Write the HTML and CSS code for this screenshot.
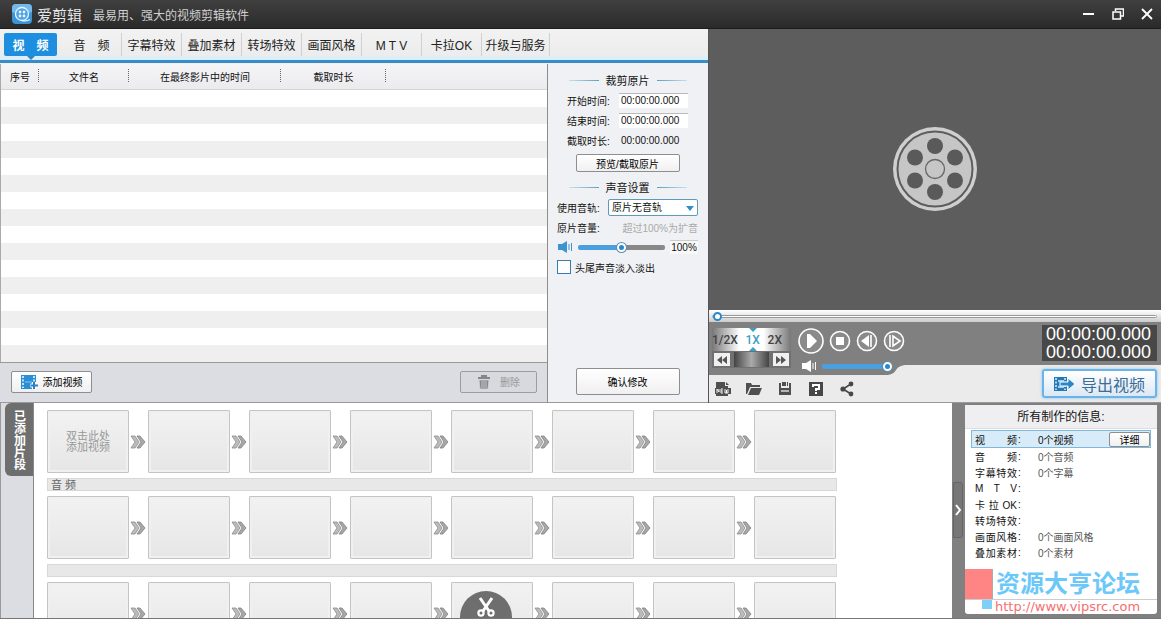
FILE: index.html
```html
<!DOCTYPE html>
<html lang="zh-CN">
<head>
    <meta charset="UTF-8">
    <meta name="viewport" content="width=device-width, initial-scale=1.0">
    <title>爱剪辑</title>
    <link rel="stylesheet" href="styles.css">
</head>
<body>
    <!-- 公用图标 -->
    <svg class="defs" width="0" height="0" aria-hidden="true">
        <symbol id="chevrons" viewBox="0 0 16 14">
            <path d="M1 1h4l4 6-4 6H1l4-6z" fill="#bcbcbc" stroke="#8c8c8c" stroke-width="0.800"/>
            <path d="M7 1h3l5 6-5 6H7l4-6z" fill="#a8a8a8" stroke="#808080" stroke-width="0.800"/>
        </symbol>
        <symbol id="speaker" viewBox="0 0 16 12">
            <path d="M1 3h4l5-3v12L5 9H1z" fill="currentColor"/>
            <path d="M12 3v6M14.500 2v8" fill="none" stroke="currentColor"/>
        </symbol>
    </svg>

    <header class="titlebar">
        <svg class="logo" viewBox="0 0 20 20">
            <rect width="20" height="20" rx="4" fill="#3b94d8"/>
            <path d="M0 4a4 4 0 0 1 4-4h12a4 4 0 0 1 4 4v4Q10 12 0 8z" fill="#73baec"/>
            <circle cx="10" cy="10" r="6.500" fill="#4ea3e0" stroke="#e8f6ff" stroke-width="1.300"/>
            <g fill="#e8f6ff"><circle cx="8" cy="8" r="1.400"/><circle cx="12" cy="8" r="1.400"/><circle cx="8" cy="12" r="1.400"/><circle cx="12" cy="12" r="1.400"/></g>
            <path d="M10 16.500q5 1 8-1" fill="none" stroke="#e8f6ff" stroke-width="1.300"/>
        </svg>
        <h1>爱剪辑</h1>
        <p>最易用、强大的视频剪辑软件</p>
        <div class="window-buttons">
            <button aria-label="最小化"><svg viewBox="0 0 12 12"><path d="M0 6h11" stroke="#fff" stroke-width="2"/></svg></button>
            <button aria-label="还原"><svg viewBox="0 0 12 12"><path d="M3.500 3V1h8v7H9M1 4h7.500v7H1z" fill="none" stroke="#fff" stroke-width="1.500"/></svg></button>
            <button aria-label="关闭"><svg viewBox="0 0 12 12"><path d="M1 1l10 10M11 1L1 11" stroke="#fff" stroke-width="1.800"/></svg></button>
        </div>
    </header>

    <main class="workspace">
        <section class="editor">
            <nav class="tabs">
                <a href="#" class="active">视&emsp;频</a>
                <a href="#">音&emsp;频</a>
                <a href="#">字幕特效</a>
                <a href="#">叠加素材</a>
                <a href="#">转场特效</a>
                <a href="#">画面风格</a>
                <a href="#">M T V</a>
                <a href="#">卡拉OK</a>
                <a href="#" class="wide">升级与服务</a>
            </nav>

            <div class="editor-body">
                <div class="files">
                    <div class="file-list">
                        <table>
                            <thead>
                                <tr>
                                    <th class="col-no">序号</th>
                                    <th class="col-name">文件名</th>
                                    <th class="col-time">在最终影片中的时间</th>
                                    <th class="col-length">截取时长</th>
                                    <th></th>
                                </tr>
                            </thead>
                        </table>
                        <div class="stripes"></div>
                    </div>
                    <div class="file-actions">
                        <button class="btn">
                            <svg width="18" height="14" viewBox="0 0 18 14">
                                <rect width="15" height="14" fill="#2b8fd6"/>
                                <path d="M2 1v12M13 1v7" stroke="#fff" stroke-width="1.500" stroke-dasharray="2 1.500"/>
                                <path d="M4 7h7" stroke="#8cc8f0"/>
                                <path d="M13 7v7M9.500 10.500h7" stroke="#fff" stroke-width="4"/>
                                <path d="M13 7v7M10 10.500h7" stroke="#2b7fc0" stroke-width="2"/>
                            </svg>
                            添加视频
                        </button>
                        <button class="btn btn-delete" disabled>
                            <svg width="14" height="14" viewBox="0 0 14 14">
                                <path d="M1 3h12M5 2V1h4v1" fill="none" stroke="#85858c" stroke-width="2"/>
                                <path d="M2 5h10l-1 9H3zM5 6v7M7 6v7M9 6v7" fill="#85858c" stroke="#d4d4db" stroke-width="0.800"/>
                            </svg>
                            删除
                        </button>
                    </div>
                </div>

                <form class="settings">
                    <h2>裁剪原片</h2>
                    <div class="row trim"><label for="start">开始时间:</label><input id="start" type="text" value="00:00:00.000"></div>
                    <div class="row trim"><label for="end">结束时间:</label><input id="end" type="text" value="00:00:00.000"></div>
                    <div class="row trim"><label for="length">截取时长:</label><output id="length">00:00:00.000</output></div>
                    <button type="button" class="btn btn-preview">预览/截取原片</button>

                    <h2>声音设置</h2>
                    <div class="row">
                        <label class="track-label" for="track">使用音轨:</label>
                        <span class="select"><select id="track"><option>原片无音轨</option></select></span>
                    </div>
                    <div class="row spread"><label for="gain">原片音量:</label><span class="hint">超过100%为扩音</span></div>
                    <div class="row spread">
                        <svg class="speaker blue"><use href="#speaker"/></svg>
                        <input id="gain" class="slider gain" type="range" value="50">
                        <output class="percent">100%</output>
                    </div>
                    <div class="row"><input id="fade" type="checkbox"><label for="fade">头尾声音淡入淡出</label></div>
                    <button type="button" class="btn btn-confirm">确认修改</button>
                </form>
            </div>
        </section>

        <section class="player">
            <div class="screen">
                <svg width="88" height="88" viewBox="-44 -44 88 88">
                    <circle r="42" fill="#cfcfcf"/>
                    <circle r="37.500" fill="#c6c6c6" stroke="#5d5d5d" stroke-width="2"/>
                    <circle r="9.500" fill="#c6c6c6" stroke="#666" stroke-width="1.300"/>
                    <g fill="#5a5a5a">
                        <circle cy="-23" r="8"/><circle cx="20" cy="-11.500" r="8"/><circle cx="20" cy="11.500" r="8"/>
                        <circle cy="23" r="8"/><circle cx="-20" cy="11.500" r="8"/><circle cx="-20" cy="-11.500" r="8"/>
                    </g>
                </svg>
            </div>
            <div class="seek"><input class="slider position" type="range" value="0" aria-label="播放进度"></div>
            <div class="controls">
                <div class="speed">
                    <div class="speed-values">
                        <button>1/2X</button><button class="current">1X</button><button>2X</button>
                    </div>
                    <div class="shuttle">
                        <button aria-label="后退"><svg viewBox="0 0 12 8"><path d="M6 0v8L1 4zM11 0v8L6 4z" fill="#555"/></svg></button>
                        <span class="wheel"></span>
                        <button aria-label="前进"><svg viewBox="0 0 12 8"><path d="M1 0v8l5-4zM6 0v8l5-4z" fill="#555"/></svg></button>
                    </div>
                </div>
                <div class="transport">
                    <div class="transport-buttons">
                        <button class="play" aria-label="播放"><svg viewBox="-13 -13 26 26"><circle r="12" fill="#8a8a8a" stroke="#fff" stroke-width="1.600"/><path d="M-4-7h3l7 7-7 7h-3z" fill="#fff"/></svg></button>
                        <button aria-label="停止"><svg viewBox="-11 -11 22 22"><circle r="9.500" fill="#8a8a8a" stroke="#fff" stroke-width="1.600"/><path d="M-4-4h8v8h-8z" fill="#fff"/></svg></button>
                        <button aria-label="上一帧"><svg viewBox="-11 -11 22 22"><circle r="9.500" fill="#8a8a8a" stroke="#fff" stroke-width="1.600"/><path d="M2-6v12l-8-6z" fill="#fff"/><path d="M4-6V6" stroke="#fff" stroke-width="1.600"/></svg></button>
                        <button aria-label="下一帧"><svg viewBox="-11 -11 22 22"><circle r="9.500" fill="#8a8a8a" stroke="#fff" stroke-width="1.600"/><path d="M-1-5v10l7-5z" fill="none" stroke="#fff" stroke-width="1.600"/><path d="M-4-6V6" stroke="#fff" stroke-width="1.600"/></svg></button>
                    </div>
                    <div class="volume">
                        <svg class="speaker"><use href="#speaker"/></svg>
                        <input class="slider level" type="range" value="100" aria-label="音量">
                    </div>
                </div>
                <div class="timecode"><span>00:00:00.000</span><span>00:00:00.000</span></div>
            </div>
            <div class="player-footer">
                <div class="tools">
                    <button aria-label="新建"><svg viewBox="0 0 16 16"><path d="M1 1h9v4h3v10H1z" fill="#505050"/><path d="M11 1l3 3h-3z" fill="#505050"/><path d="M0 7h16v6H0z" fill="#505050"/><path d="M2 12V8l2 3V8M6 8v4h2M6 10h2M6 8h2M10 8v4h1.500V9v3H13V8" fill="none" stroke="#fff" stroke-width="0.900"/></svg></button>
                    <button aria-label="打开"><svg viewBox="0 0 16 16"><path d="M0 2h5l1 2h8v2H4L1 13H0z" fill="#505050"/><path d="M5 7h11l-3 7H2z" fill="#505050"/></svg></button>
                    <button aria-label="保存"><svg viewBox="0 0 16 16"><path d="M2 2h2v5h8V2h2v12H2z" fill="#505050"/><path d="M5 1h4v4H5zM10 1h1v4h-1z" fill="#505050"/><path d="M4 10h8" stroke="#eee" stroke-width="1.300"/></svg></button>
                    <button aria-label="帮助"><svg viewBox="0 0 16 16"><path d="M1 1h14v14H1z" fill="#484848"/><path d="M5 6V4h6v4H8v2M8 11v2" fill="none" stroke="#fff" stroke-width="2"/></svg></button>
                    <button aria-label="分享"><svg viewBox="0 0 16 16"><path d="M12 3L4 8l8 5" fill="none" stroke="#484848" stroke-width="1.600"/><g fill="#484848"><circle cx="12" cy="3" r="2.400"/><circle cx="4" cy="8" r="2.600"/><circle cx="12" cy="13" r="2.400"/></g></svg></button>
                </div>
                <button class="export">
                    <svg width="22" height="16" viewBox="0 0 22 16">
                        <path d="M0 1h13v14H0z" fill="#2579b5"/>
                        <path d="M2 2v12M11 2v12" stroke="#fff" stroke-width="1.300" stroke-dasharray="2 1.500"/>
                        <path d="M4 5h6M4 11h6" stroke="#9cd0f0" stroke-width="2"/>
                        <path d="M6 6h8V2l7 6-7 6v-4H6z" fill="#2b88c8" stroke="#fff"/>
                    </svg>
                    导出视频
                </button>
            </div>
        </section>
    </main>

    <section class="bottom">
        <div class="side"><span class="side-tab">已添加片段</span></div>
        <div class="timeline">
            <div class="clips">
                <div class="clip">双击此处<br>添加视频</div><svg><use href="#chevrons"/></svg>
                <div class="clip"></div><svg><use href="#chevrons"/></svg>
                <div class="clip"></div><svg><use href="#chevrons"/></svg>
                <div class="clip"></div><svg><use href="#chevrons"/></svg>
                <div class="clip"></div><svg><use href="#chevrons"/></svg>
                <div class="clip"></div><svg><use href="#chevrons"/></svg>
                <div class="clip"></div><svg><use href="#chevrons"/></svg>
                <div class="clip"></div>
            </div>
            <div class="audio-bar">音 频</div>
            <div class="clips">
                <div class="clip"></div><svg><use href="#chevrons"/></svg>
                <div class="clip"></div><svg><use href="#chevrons"/></svg>
                <div class="clip"></div><svg><use href="#chevrons"/></svg>
                <div class="clip"></div><svg><use href="#chevrons"/></svg>
                <div class="clip"></div><svg><use href="#chevrons"/></svg>
                <div class="clip"></div><svg><use href="#chevrons"/></svg>
                <div class="clip"></div><svg><use href="#chevrons"/></svg>
                <div class="clip"></div>
            </div>
            <div class="audio-bar"></div>
            <div class="clips">
                <div class="clip"></div><svg><use href="#chevrons"/></svg>
                <div class="clip"></div><svg><use href="#chevrons"/></svg>
                <div class="clip"></div><svg><use href="#chevrons"/></svg>
                <div class="clip"></div><svg><use href="#chevrons"/></svg>
                <div class="clip"></div><svg><use href="#chevrons"/></svg>
                <div class="clip"></div><svg><use href="#chevrons"/></svg>
                <div class="clip"></div><svg><use href="#chevrons"/></svg>
                <div class="clip"></div>
            </div>
            <button class="cut" aria-label="剪切">
                <svg width="20" height="20" viewBox="0 0 20 20">
                    <path d="M4 1l9 13M16 1L7 14" stroke="#fff" stroke-width="3"/>
                    <circle cx="5" cy="16" r="2.600" fill="none" stroke="#fff" stroke-width="2.200"/>
                    <circle cx="15" cy="16" r="2.600" fill="none" stroke="#fff" stroke-width="2.200"/>
                </svg>
            </button>
        </div>
        <aside class="info">
            <button class="collapse" aria-label="收起"><svg width="7" height="12" viewBox="0 0 7 12"><path d="M1 1l4 5-4 5" fill="none" stroke="#fff" stroke-width="2"/></svg></button>
            <div class="info-panel">
                <h2>所有制作的信息:</h2>
                <ul>
                    <li class="selected"><b>视 频</b><i>:</i><span>0个视频</span><button class="btn">详细</button></li>
                    <li><b>音 频</b><i>:</i><span>0个音频</span></li>
                    <li><b>字幕特效</b><i>:</i><span>0个字幕</span></li>
                    <li><b>M T V</b><i>:</i></li>
                    <li><b>卡 拉 OK</b><i>:</i></li>
                    <li><b>转场特效</b><i>:</i></li>
                    <li><b>画面风格</b><i>:</i><span>0个画面风格</span></li>
                    <li><b>叠加素材</b><i>:</i><span>0个素材</span></li>
                </ul>
                <div class="forum">
                    <div class="forum-name"><span class="pink"></span><strong>资源大亨论坛</strong></div>
                    <div class="forum-url"><span class="blue-box"></span><a href="#">http://www.vipsrc.com</a></div>
                </div>
            </div>
        </aside>
    </section>
</body>
</html>
```

FILE: styles.css
```css
* {
    box-sizing: border-box;
}

body {
    margin: 0;
    height: 100vh;
    display: flex;
    flex-direction: column;
    overflow: hidden;
    font-family: "Liberation Sans", "Noto Sans CJK SC", sans-serif;
    font-size: 10px;
    color: #111;
    background: #dcdce3;
}

h1, h2, p, ul {
    margin: 0;
    padding: 0;
    font-weight: normal;
}

button, input, select {
    font: inherit;
    color: inherit;
    margin: 0;
    padding: 0;
    border: 0;
    background: none;
}

svg {
    display: block;
    flex: none;
}

.defs {
    position: absolute;
}

/* 标题栏 */
.titlebar {
    flex: none;
    height: 29px;
    display: flex;
    align-items: center;
    padding: 0 8px 0 12px;
    background: linear-gradient(#404040, #2a2a2a);
    border-bottom: 1px solid #1c1c1c;
    color: #e6e6e6;
}

.logo {
    width: 20px;
    height: 20px;
    margin-right: 5px;
}

.titlebar h1 {
    font-size: 15px;
}

.titlebar p {
    margin-left: 11px;
    font-size: 12px;
    color: #d0d0d0;
}

.window-buttons {
    display: flex;
    gap: 17px;
    margin-left: auto;
}

.window-buttons svg {
    width: 12px;
    height: 12px;
}

.workspace {
    flex: 1;
    min-height: 0;
    display: flex;
}

.editor {
    flex: 0 0 709px;
    display: flex;
    flex-direction: column;
    border-right: 1px solid #555;
}

/* 标签页 */
.tabs {
    display: flex;
    height: 35px;
    padding: 4px 0 0 1px;
    background: linear-gradient(#f2f2f2, #ececec 27px, #d9effb 28px, #d9effb 31px, #3a8cc4 31px, #3a8cc4 34px, #f0f0f0 34px);
}

.tabs a {
    width: 60px;
    height: 23px;
    line-height: 26px;
    font-size: 12px;
    text-align: center;
    white-space: nowrap;
    color: #222;
    text-decoration: none;
    border-right: 1px solid #d0d0d0;
}

.tabs .wide {
    width: 68px;
}

.tabs .active {
    position: relative;
    width: 53px;
    margin: 0 5px 0 3px;
    border: 0;
    border-radius: 2px;
    background: #1e8fe0;
    color: #fff;
    font-weight: bold;
}

.tabs .active::after {
    content: "";
    position: absolute;
    left: 23px;
    top: 23px;
    border: 4px solid transparent;
    border-top-color: #2d86c4;
}

.editor-body {
    flex: 1;
    min-height: 0;
    display: flex;
}

.files {
    flex: 1;
    display: flex;
    flex-direction: column;
    border-right: 1px solid #8c8c8c;
}

.file-list {
    flex: 1;
    display: flex;
    flex-direction: column;
    border-left: 1px solid #aaa;
    background: #fff;
}

.file-list table {
    width: 100%;
    table-layout: fixed;
    border-collapse: collapse;
}

.file-list th {
    height: 25px;
    padding: 0;
    font-weight: normal;
    background:
        repeating-linear-gradient(#666 0 1px, transparent 1px 2px) right 5px / 1px 14px no-repeat,
        linear-gradient(#f5f5f7, #ebebee);
    border-bottom: 1px solid #d4d4d4;
}

.file-list th:last-child {
    background: linear-gradient(#f5f5f7, #ebebee);
}

.col-no {
    width: 38px;
}

.col-name {
    width: 90px;
}

.col-time {
    width: 152px;
}

.col-length {
    width: 105px;
}

.stripes {
    flex: 1;
    background: repeating-linear-gradient(#fff 0 17px, #efefef 17px 34px);
}

.file-actions {
    height: 41px;
    display: flex;
    justify-content: space-between;
    align-items: center;
    padding: 0 10px 2px 11px;
    border-top: 1px solid #999;
    border-bottom: 1px solid #999;
    background: #dcdce3;
}

.btn {
    display: flex;
    align-items: center;
    justify-content: center;
    border: 1px solid #8e8e8e;
    border-radius: 2px;
    background: linear-gradient(#fff, #f0f0f0);
    color: #000;
}

.file-actions .btn {
    width: 81px;
    height: 22px;
    gap: 4px;
}

.file-actions .btn-delete {
    width: 77px;
    gap: 9px;
    background: #d8d8df;
    border-color: #9c9ca4;
    color: #999;
}

/* 右侧设置 */
.settings {
    width: 160px;
    display: flex;
    flex-direction: column;
    padding: 6px 10px 7px 9px;
    background: #f0f1f4;
    border-bottom: 1px solid #999;
}

.settings h2 {
    display: flex;
    align-items: center;
    justify-content: center;
    gap: 7px;
    height: 20px;
    font-size: 11px;
}

.settings h2::before,
.settings h2::after {
    content: "";
    width: 30px;
    height: 1px;
    background: linear-gradient(90deg, #c8dfec, #5a9fc4);
}

.settings h2::after {
    background: linear-gradient(90deg, #5a9fc4, #c8dfec);
}

.row {
    display: flex;
    align-items: center;
    gap: 4px;
    height: 20px;
    white-space: nowrap;
}

.trim {
    padding: 0 10px;
    justify-content: space-between;
}

.trim input,
.trim output {
    width: 69px;
    height: 15px;
    padding-left: 2px;
    line-height: 15px;
}

.trim input {
    background: #fff;
    border-top: 1px solid #bbb;
}

.btn-preview {
    width: 104px;
    height: 18px;
    margin: 4px auto 5px;
}

.btn-confirm {
    width: 104px;
    height: 27px;
    margin: auto auto 0;
}

.track-label {
    width: 47px;
}

.select {
    position: relative;
    flex: 1;
}

.select select {
    width: 100%;
    height: 17px;
    padding-left: 3px;
    appearance: none;
    border: 1px solid #5f9ab8;
    border-radius: 2px;
    background: #fff;
}

.select::after {
    content: "";
    position: absolute;
    right: 4px;
    top: 7px;
    border: 4px solid transparent;
    border-top: 5px solid #2f8fc8;
    border-bottom: 0;
    pointer-events: none;
}

.spread {
    justify-content: space-between;
}

.hint {
    color: #aaa;
}

.speaker {
    width: 16px;
    height: 12px;
    color: #fff;
}

.blue {
    color: #3a94d0;
}

.percent {
    width: 28px;
    height: 14px;
    line-height: 14px;
    text-align: center;
    border-top: 1px solid #ccc;
    background: #f8f8f8;
}

.settings input[type="checkbox"] {
    width: 14px;
    height: 14px;
    appearance: none;
    border: 1px solid #2f7fb0;
    background: #fff;
}

/* 滑块 */
.slider {
    appearance: none;
    height: 10px;
}

.slider::-webkit-slider-runnable-track {
    height: 5px;
    border-radius: 2px;
    background: #4a9fe0;
}

.slider::-webkit-slider-thumb {
    appearance: none;
    width: 9px;
    height: 9px;
    margin-top: -2px;
    border: 2px solid #fff;
    border-radius: 50%;
    background: #2b88c8;
    box-shadow: 0 0 0 1px #5a8fb0;
}

.gain {
    width: 87px;
}

.gain::-webkit-slider-runnable-track {
    background: linear-gradient(90deg, #4a9fe0 50%, #888 50%);
}

/* 播放器 */
.player {
    flex: 1;
    min-width: 0;
    display: flex;
    flex-direction: column;
}

.screen {
    flex: 1;
    display: flex;
    align-items: center;
    justify-content: center;
    padding-bottom: 2px;
    background: #5d5d5d;
}

.seek {
    height: 12px;
    display: flex;
    align-items: center;
    padding: 0 4px 0 3px;
    background: linear-gradient(#fff, #ccc);
}

.position {
    width: 100%;
}

.position::-webkit-slider-runnable-track {
    height: 3px;
    background: #fff;
    border: 1px solid #999;
}

.position::-webkit-slider-thumb {
    margin-top: -4px;
    border-color: #2b88c8;
    background: #fff;
    box-shadow: none;
}

.controls {
    position: relative;
    z-index: 1;
    height: 43px;
    display: flex;
    align-items: flex-start;
    padding: 3px 4px 0 3px;
    background: #808080;
}

/* 左下方多出的深色弧形区域 */
.controls::before {
    content: "";
    position: absolute;
    z-index: -1;
    left: 0;
    top: 43px;
    width: 196px;
    height: 10px;
    background: #808080;
    clip-path: path("M0 0H196Q189 1 187 5T179 10H0Z");
}

.speed {
    width: 79px;
    margin-top: 3px;
}

.speed-values {
    position: relative;
    display: flex;
    justify-content: space-between;
    height: 23px;
    padding-right: 9px;
    font: 500 12px Roboto, sans-serif;
    color: #444;
    background: linear-gradient(90deg, #777, #fff 35%, #fff 65%, #777);
}

.speed-values .current {
    color: #3b9fc8;
}

.speed-values::before,
.speed-values::after {
    content: "";
    position: absolute;
    left: 37px;
    top: 0;
    border: 4px solid transparent;
    border-top-color: #3b9fc8;
    border-bottom: 0;
}

.speed-values::after {
    top: 19px;
    border-top: 0;
    border-bottom: 4px solid #3b9fc8;
}

.shuttle {
    display: flex;
    justify-content: space-between;
    align-items: center;
    height: 17px;
    padding: 0 2px;
    background: #707070;
}

.shuttle button {
    display: flex;
    align-items: center;
    justify-content: center;
    width: 16px;
    height: 13px;
    background: #f0f0f0;
}

.shuttle svg {
    width: 12px;
    height: 8px;
}

.wheel {
    width: 35px;
    height: 15px;
    background: linear-gradient(90deg, #444, #aaa 50%, #444);
}

.transport {
    margin-left: 7px;
}

.transport-buttons {
    display: flex;
    align-items: center;
    gap: 5px;
    height: 32px;
}

.transport-buttons svg {
    width: 22px;
    height: 22px;
}

.transport-buttons .play svg {
    width: 26px;
    height: 26px;
}

.volume {
    display: flex;
    align-items: center;
    gap: 5px;
    height: 18px;
    padding-left: 3px;
}

.level {
    width: 70px;
}

.timecode {
    display: flex;
    flex-direction: column;
    width: 115px;
    height: 36px;
    margin-left: auto;
    padding-left: 4px;
    font-size: 18px;
    line-height: 18px;
    color: #fff;
    background: #484848;
}

.player-footer {
    height: 38px;
    display: flex;
    justify-content: space-between;
    padding: 4px 4px 0 6px;
    background: #ebebeb;
    border-bottom: 1px solid #999;
}

.tools {
    display: flex;
    align-items: flex-end;
    gap: 15px;
    padding-bottom: 5px;
}

.tools svg {
    width: 16px;
    height: 16px;
}

.export {
    display: flex;
    align-items: center;
    justify-content: center;
    gap: 5px;
    width: 115px;
    height: 29px;
    border: 2px solid #6ab4e8;
    border-radius: 3px;
    background: linear-gradient(#fff, #dce8f4);
    box-shadow: 0 0 3px #7cc0f0;
    color: #3a6e98;
    font-size: 16px;
}

/* 时间线 */
.bottom {
    flex: none;
    height: 216px;
    display: flex;
    border-bottom: 1px solid #777;
}

.side {
    width: 34px;
    padding-left: 4px;
    border-left: 1px solid #999;
    border-right: 1px solid #888;
}

.side-tab {
    display: flex;
    align-items: center;
    justify-content: center;
    width: 100%;
    height: 73px;
    writing-mode: vertical-rl;
    font-size: 12px;
    font-weight: bold;
    color: #fff;
    background: #6e6e6e;
    border-radius: 6px 0 0 6px;
}

.timeline {
    position: relative;
    flex: 1;
    min-width: 0;
    padding: 7px 13px 0;
    overflow: hidden;
    background: #fff;
}

.clips {
    display: flex;
    align-items: center;
}

.clips svg {
    width: 16px;
    height: 14px;
    margin: 0 2px 0 1px;
}

.clip {
    flex: none;
    display: flex;
    align-items: center;
    justify-content: center;
    width: 82px;
    height: 63px;
    font-size: 11px;
    line-height: 11px;
    color: #999;
    border: 1px solid #c4c4c4;
    border-radius: 1px;
    background: linear-gradient(#f2f2f2, #e6e6e6);
    box-shadow: inset 0 0 0 2px #f0f0f0;
}

.audio-bar {
    width: 790px;
    height: 13px;
    margin: 5px 0;
    padding-left: 3px;
    font-size: 11px;
    line-height: 12px;
    color: #666;
    border: 1px solid #d8d8d8;
    background: #e8e8e8;
}

.cut {
    position: absolute;
    left: 426px;
    bottom: -25px;
    width: 52px;
    height: 52px;
    border-radius: 50%;
    background: #6e6e6e;
}

.cut svg {
    margin: -20px auto 0;
}

/* 制作信息 */
.info {
    flex: 0 0 209px;
    display: flex;
    align-items: center;
    padding: 2px 4px 4px 1px;
    background: #808080;
}

.collapse {
    display: flex;
    align-items: center;
    justify-content: center;
    width: 10px;
    height: 56px;
    margin-right: 2px;
    border: 1px solid #666;
    border-radius: 0 3px 3px 0;
    background: #777;
}

.info-panel {
    position: relative;
    flex: 1;
    align-self: stretch;
    background: #fff;
    border-radius: 3px;
}

.info-panel h2 {
    height: 24px;
    line-height: 24px;
    font-size: 12px;
    text-align: center;
    background: #efeff2;
    border-bottom: 1px solid #ddd;
}

.info ul {
    padding: 1px 6px;
    list-style: none;
}

.info li {
    display: flex;
    align-items: center;
    height: 16px;
    padding-left: 4px;
    color: #555;
}

.info li b {
    width: 42px;
    font-weight: normal;
    text-align-last: justify;
    color: #111;
}

.info li i {
    width: 21px;
    padding-left: 1px;
    font-style: normal;
    color: #111;
}

.info li.selected {
    height: 18px;
    padding-left: 3px;
    color: #111;
    border: 1px solid #7fb8d8;
    background: #d8ebf8;
}

.info .btn {
    width: 41px;
    height: 15px;
    margin-left: auto;
}

.forum {
    position: absolute;
    left: 0;
    right: 0;
    bottom: 0;
}

.forum-name,
.forum-url {
    display: flex;
}

.forum-name {
    height: 35px;
    align-items: flex-end;
    border-bottom: 1px solid #ccc;
}

.pink {
    width: 28px;
    height: 30px;
    border-right: 1px solid #aaa;
    background: #ff8484;
}

.forum strong {
    margin-left: 3px;
    font-size: 24px;
    line-height: 30px;
    color: #6cc8f8;
}

.forum-url {
    height: 14px;
    padding-left: 17px;
}

.blue-box {
    width: 10px;
    height: 9px;
    background: #7cd0fa;
}

.forum-url a {
    margin-left: 3px;
    font: 13px/13px "DejaVu Sans", sans-serif;
    color: #f47070;
    text-decoration: none;
}
```
